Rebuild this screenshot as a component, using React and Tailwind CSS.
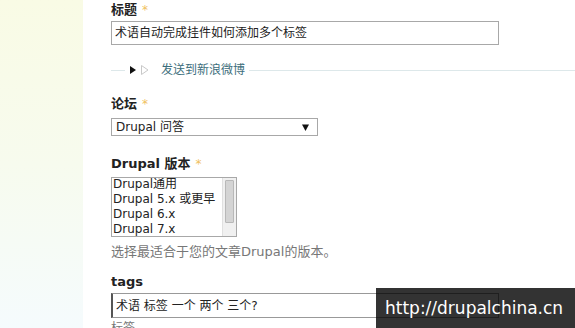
import React from "react";

const cjk = { fontFamily: '"DejaVu Sans", "Noto Sans CJK SC", sans-serif' };

function Label({ children }) {
  return (
    <div className="h-[16px] leading-[16px] text-[13px] font-bold text-[#222]" style={cjk}>
      {children}
      <span className="ml-[5px] text-[#f0c060] font-normal text-[12px]">*</span>
    </div>
  );
}

export default function App() {
  return (
    <div className="relative w-[575px] h-[328px] overflow-hidden bg-white flex" style={cjk}>
      <div className="w-[83px] h-full shrink-0 bg-gradient-to-b from-[#f9fbe5] via-[#f7fbee] to-[#f5fbfd]" />
      <div className="flex-1 pl-[28px] flex flex-col [&>*]:shrink-0">
        <div className="mt-[2px]">
          <Label>标题</Label>
        </div>
        <div className="mt-[3px] w-[388px] h-[24px] border border-[#a8a8a8] flex items-center pl-[3px] text-[12px] text-[#222]">
          术语自动完成挂件如何添加多个标签
        </div>
        <div className="mt-[17px] h-[16px] flex items-center -mr-px">
          <div className="w-[14px] h-px bg-[#dde8ea]" />
          <svg width="6" height="8" viewBox="0 0 6 8" className="ml-[5px]">
            <path d="M0 0 L6 4 L0 8 Z" fill="#111" />
          </svg>
          <svg width="8" height="10" viewBox="0 0 8 10" className="ml-[5px]">
            <path d="M0.5 0.5 L7 5 L0.5 9.5 Z" fill="none" stroke="#c8c8c8" strokeWidth="1" />
          </svg>
          <span className="ml-[12px] text-[12px] text-[#3d6e7c] leading-[16px]">发送到新浪微博</span>
          <div className="ml-[4px] flex-1 h-px bg-[#dde8ea]" />
        </div>
        <div className="mt-[18px]">
          <Label>论坛</Label>
        </div>
        <div className="mt-[6px] w-[207px] h-[18px] border border-[#a8a8a8] flex items-center pl-[4px] pr-[8px] text-[12px] text-[#222]">
          <span className="flex-1">Drupal 问答</span>
          <svg width="7" height="7" viewBox="0 0 7 7">
            <path d="M0 0.5 L7 0.5 L3.5 7 Z" fill="#111" />
          </svg>
        </div>
        <div className="mt-[20px]">
          <Label>Drupal 版本</Label>
        </div>
        <div className="mt-[5px] w-[126px] h-[60px] border border-[#a8a8a8] flex">
          <div className="flex-1 flex flex-col pl-[1px] text-[12px] leading-[15px] text-[#222] whitespace-nowrap overflow-hidden">
            <div className="-mt-[1px]">Drupal通用</div>
            <div>Drupal 5.x 或更早</div>
            <div>Drupal 6.x</div>
            <div>Drupal 7.x</div>
          </div>
          <div className="w-[14px] h-full bg-[#f0f0f0] border-l border-[#e0e0e0] p-[2px]">
            <div className="w-full h-[43px] bg-[#d4d4d4] border border-[#b8b8b8] rounded-[1px]" />
          </div>
        </div>
        <div className="mt-[7px] h-[16px] leading-[16px] text-[13px] text-[#777]">
          选择最适合于您的文章Drupal的版本。
        </div>
        <div className="mt-[14px]">
          <div className="h-[16px] leading-[16px] text-[13px] font-bold text-[#222]">tags</div>
        </div>
        <div className="mt-[3px] w-[388px] h-[25px] border border-[#999] border-l-2 border-l-[#555] flex items-center pl-[3px] text-[12px] text-[#222]">
          术语 标签 一个 两个 三个?
        </div>
        <div className="mt-[2px] h-[16px] leading-[16px] text-[12px] text-[#777]">标签</div>
      </div>
      <div className="absolute left-[376px] top-[288px] w-[199px] h-[40px] bg-black/80 flex items-center pl-[9px]">
        <span className="text-[17px] text-white leading-none" style={{ fontFamily: '"DejaVu Sans", sans-serif' }}>
          http://drupalchina.cn
        </span>
      </div>
    </div>
  );
}
